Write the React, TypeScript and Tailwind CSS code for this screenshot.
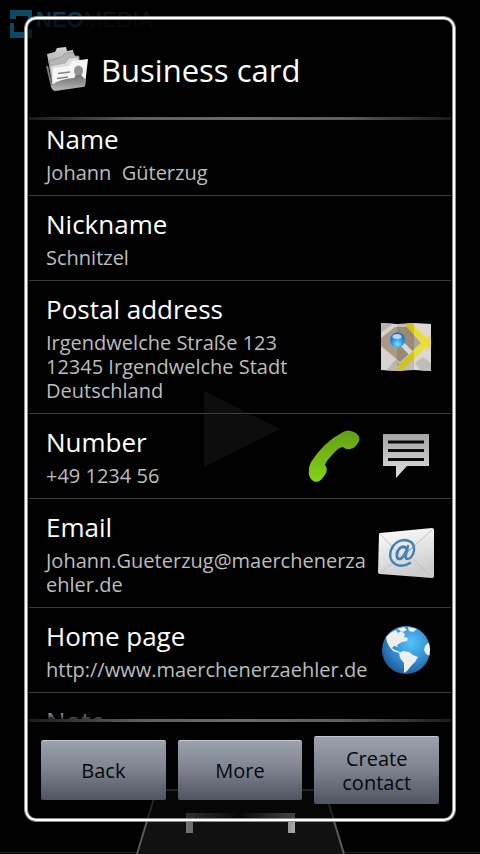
import React, { FC, ReactNode } from "react";
import clsx from "clsx";

const App = () => {
  return (
    <main className="relative h-screen overflow-hidden bg-black px-6 pt-4 pb-8 font-['Open_Sans',sans-serif]">
      <Backdrop />
      <section
        role="dialog"
        aria-labelledby="dialog-title"
        className="relative flex h-full flex-col rounded-xl border border-[#8c8c8c] bg-black/60 shadow-[inset_0_0_0_2px_#ffffff,inset_0_0_0_3px_#8c8c8c]"
      >
        <header className="flex h-[100px] shrink-0 items-center gap-2.5 px-5 pt-1">
          <CardsIcon />
          <h1 id="dialog-title" className="pt-0.5 text-[31px] leading-10 text-white">
            Business card
          </h1>
        </header>
        <Divider />

        <div className="relative min-h-0 flex-1">
          <ul className="h-full overflow-y-auto px-1 [scrollbar-width:none]">
            <Row title="Name" lines={["Johann  Güterzug"]} first />
            <Row title="Nickname" lines={["Schnitzel"]} />
            <Row
              title="Postal address"
              lines={[
                "Irgendwelche Straße 123",
                "12345 Irgendwelche Stadt",
                "Deutschland",
              ]}
            >
              <Action label="Show on map">
                <MapIcon />
              </Action>
            </Row>
            <Row title="Number" lines={["+49 1234 56"]}>
              <Action label="Call">
                <PhoneIcon />
              </Action>
              <Action label="Send message">
                <MessageIcon />
              </Action>
            </Row>
            <Row
              title="Email"
              lines={["Johann.Gueterzug@maerchenerza", "ehler.de"]}
            >
              <Action label="Send email">
                <MailIcon />
              </Action>
            </Row>
            <Row title="Home page" lines={["http://www.maerchenerzaehler.de"]}>
              <Action label="Open home page">
                <GlobeIcon />
              </Action>
            </Row>
            <Row title="Note" lines={[]} />
          </ul>
          {/* fading edge */}
          <div className="pointer-events-none absolute inset-x-1 bottom-0 h-3 bg-linear-to-b from-transparent to-black/80"></div>
        </div>

        <Divider />
        <footer className="flex h-[99px] shrink-0 items-center gap-3 px-4 pb-1">
          <DialogButton className="h-[60px]">Back</DialogButton>
          <DialogButton className="h-[60px]">More</DialogButton>
          <DialogButton className="h-[68px]">Create contact</DialogButton>
        </footer>
      </section>
    </main>
  );
};

const Divider = () => (
  <div className="mx-1 h-[3px] shrink-0 bg-[linear-gradient(to_right,#1a1a1a,#5c5c5c_25%,#6b6b6b_50%,#5c5c5c_75%,#1a1a1a)]"></div>
);

interface RowProps {
  title: string;
  lines: string[];
  first?: boolean;
  children?: ReactNode;
}

const Row: FC<RowProps> = (props) => {
  return (
    <li
      className={clsx(
        "flex items-center border-b border-[#3c3c3c] pr-[15px] pb-2.5 pl-[17px]",
        props.first ? "pt-[3px]" : "pt-3",
      )}
    >
      <div className="min-w-0 flex-1">
        <h2 className="text-[26px] leading-8 text-white">{props.title}</h2>
        <div className="mt-1.5 min-h-6 text-xl leading-6 whitespace-pre text-[#bdbdbd]">
          {props.lines.map((line) => (
            <p key={line}>{line}</p>
          ))}
        </div>
      </div>
      <div className="mb-0.5 flex shrink-0 gap-3">{props.children}</div>
    </li>
  );
};

const Action: FC<{ label: string; children: ReactNode }> = (props) => (
  <button
    type="button"
    aria-label={props.label}
    className="flex h-14 w-[60px] items-center justify-center"
  >
    {props.children}
  </button>
);

const DialogButton: FC<{ className: string; children: ReactNode }> = (
  props,
) => (
  <button
    type="button"
    className={clsx(
      "flex-1 rounded-xs border-t border-[#c3c8cf] bg-linear-to-b from-[#9ba2ad] via-[#7c828d] to-[#4e5560] px-4 pt-0.5 text-xl leading-6 text-[#05070c]",
      props.className,
    )}
  >
    {props.children}
  </button>
);

// dimmed start screen of the scanner that lies behind the dialog
const Backdrop = () => (
  <div aria-hidden="true">
    <div className="absolute top-[10px] left-[10px] flex gap-1">
      <svg width="22" height="28" viewBox="0 0 22 28" fill="#0b4863">
        <path d="M0 0H22V10H18V6H6V9H0ZM0 13H4V22H18V19H22V28H0Z" />
      </svg>
      <span className="font-['Liberation_Sans',sans-serif] text-[22px] leading-5 font-bold text-[#0c3a50]">
        NEO<span className="font-normal text-[#141414]">MEDIA</span>
      </span>
    </div>
    <svg
      className="absolute top-1/2 left-1/2 -translate-x-9 -translate-y-9"
      width="76"
      height="76"
      viewBox="0 0 76 76"
    >
      <path d="M0 0L76 38L0 76Z" fill="#202020" />
    </svg>
    <svg
      className="absolute bottom-0 left-1/2 -translate-x-1/2"
      width="480"
      height="66"
      viewBox="0 0 480 66"
      fill="none"
    >
      <path d="M0 64.5H137M344 64.5H480" stroke="#1c1c1c" />
      <path
        d="M137 66L154 10Q157 2 165 2H316Q324 2 327 10L344 66"
        fill="#111111"
        stroke="#5a5a5a"
        strokeWidth="2"
      />
      <path d="M186 25H295V45H288V31H193V45H186Z" fill="url(#scan)" />
      <defs>
        <linearGradient id="scan" x1="186" x2="295" gradientUnits="userSpaceOnUse">
          <stop stopColor="#777777" />
          <stop offset="0.5" stopColor="#111111" />
          <stop offset="1" stopColor="#aaaaaa" />
        </linearGradient>
      </defs>
    </svg>
  </div>
);

const CardsIcon = () => (
  <svg width="46" height="46" viewBox="0 0 46 46" className="shrink-0">
    <defs>
      <linearGradient id="folder" x1="0" y1="0" x2="0" y2="1">
        <stop stopColor="#d5d5d5" />
        <stop offset="1" stopColor="#777777" />
      </linearGradient>
      <linearGradient id="pocket" x1="0" y1="0" x2="0" y2="1">
        <stop stopColor="#6f6f6f" />
        <stop offset="1" stopColor="#b9b9b9" />
      </linearGradient>
    </defs>
    <path d="M2 8L10 6L12 2L21 1L22 5L28 4L31 40L8 42Z" fill="url(#folder)" />
    <path d="M4 15L17 11L20 7L28 6L30 10L34 10L36 38L8 42Z" fill="#b5b5b5" stroke="#888888" strokeWidth="0.6" />
    <path d="M5 20L20 17L24 12L33 11L34 15L38 15L38 38L9 42Z" fill="#dddddd" stroke="#999999" strokeWidth="0.6" />
    <path d="M8 22L24 20L27 15L43 13L40 39L7 41Z" fill="#f6f6f6" />
    <path d="M2 20L7 41" stroke="#777777" strokeWidth="2" />
    <path d="M13 27.500L25 26M12 32.500L23 31" stroke="#858585" strokeWidth="1.600" />
    <ellipse cx="33.500" cy="25" rx="4.500" ry="5.500" fill="#929292" />
    <path d="M6 39Q15 33 29 32L31 29H36L41 34L40 40Q40 41 38 41L10 45Q6 44 6 39Z" fill="url(#pocket)" />
  </svg>
);

const MapIcon = () => (
  <svg width="50" height="48" viewBox="0 0 50 48">
    <defs>
      <clipPath id="sheet">
        <path d="M0 0L16 1L33 0L50 1V48L33 47L16 48L0 47Z" />
      </clipPath>
      <radialGradient id="pin" cx="0.5" cy="0.75" r="0.7">
        <stop stopColor="#8be4ff" />
        <stop offset="0.5" stopColor="#249bea" />
        <stop offset="1" stopColor="#1668c4" />
      </radialGradient>
    </defs>
    <g clipPath="url(#sheet)">
      <path d="M0 0H50V48H0Z" fill="#d6d3d0" />
      <path d="M0 15L14 4L26 4L40 20L19 39L0 23Z" fill="#ab9a84" />
      <path d="M0 0L13 0L0 10ZM5 48L15 36L23 48ZM34 40L42 34L50 40V48H40Z" fill="#bbb5b0" />
      <path d="M18 18L30 30" stroke="#f3f0ee" strokeWidth="5" fill="none" />
      <path d="M26 0L50 24M50 15L17 47" stroke="#e8db1b" strokeWidth="6" />
      <path d="M33 0H50V48H33Z" fill="#ffffff" opacity="0.1" />
      <path d="M16 0H33V48H16Z" fill="#000000" opacity="0.1" />
    </g>
    <circle cx="16.500" cy="17" r="7.500" fill="url(#pin)" />
    <ellipse cx="16" cy="13.500" rx="4.500" ry="2.500" fill="#d8f0ff" opacity="0.8" />
  </svg>
);

const PhoneIcon = () => (
  <svg width="52" height="52" viewBox="0 0 52 52">
    <defs>
      <linearGradient id="handset" x1="0" y1="0" x2="0" y2="1">
        <stop stopColor="#629e16" />
        <stop offset="1" stopColor="#83d414" />
      </linearGradient>
    </defs>
    <path
      d="M35 2Q40 -1 46 2Q53 6 51 11Q48 18 42 19Q38 20 35 17Q31 17 25 24Q18 31 17 35Q20 38 18 43Q13 52 8 52Q3 51 1 45Q0 38 3 32Q16 12 35 2Z"
      fill="url(#handset)"
    />
  </svg>
);

const MessageIcon = () => (
  <svg width="46" height="44" viewBox="0 0 46 44">
    <defs>
      <linearGradient id="bubble" x1="0" y1="0" x2="0" y2="1">
        <stop stopColor="#a5a5a5" />
        <stop offset="1" stopColor="#dedede" />
      </linearGradient>
    </defs>
    <path d="M0 0H46V32H24L13 44V32H0Z" fill="url(#bubble)" />
    <path d="M5 8H41M5 16.500H41M5 25.500H41" stroke="#0c0c0c" strokeWidth="3" />
  </svg>
);

const MailIcon = () => (
  <svg width="56" height="50" viewBox="0 0 56 50">
    <defs>
      <linearGradient id="envelope" x1="0" y1="0" x2="0.300" y2="1">
        <stop stopColor="#ffffff" />
        <stop offset="1" stopColor="#cdcdcd" />
      </linearGradient>
    </defs>
    <path d="M1 6Q1 5 2 5L54 0Q56 0 56 2V48Q56 50 54 50L2 46Q0 46 0 44Z" fill="url(#envelope)" />
    <path d="M2 45L20 31M54 49L36 32M2 6L24 29L54 2" stroke="#c0c0c0" fill="none" />
    <g stroke="#4380ba" fill="none" strokeLinecap="round">
      <path d="M32 35Q24 40 17 36Q10 31 13 22Q17 12 27 12Q37 13 36 23Q34 31 29 31Q27 31 28 27L30 18" strokeWidth="2.400" />
      <path d="M29 21Q26 17 22 20Q18 24 19 29Q21 33 25 29L29 22" strokeWidth="2.800" />
    </g>
    <path d="M24 29L36 18" stroke="#85898e" />
  </svg>
);

const GlobeIcon = () => (
  <svg width="48" height="48" viewBox="0 0 48 48">
    <defs>
      <radialGradient id="ocean" cx="0.600" cy="0.350" r="0.650">
        <stop stopColor="#55c3f8" />
        <stop offset="0.600" stopColor="#348fd3" />
        <stop offset="1" stopColor="#235f9d" />
      </radialGradient>
      <clipPath id="disc">
        <circle cx="24" cy="24" r="24" />
      </clipPath>
    </defs>
    <g clipPath="url(#disc)">
      <path d="M0 0H48V48H0Z" fill="url(#ocean)" />
      <g fill="#eeeeec">
        <path d="M4 11Q8 6 14 4L16 7L19 5L23 8L22 11L26 12L25 15L20 16L15 19L16 21L12 20L10 22L13 24L16 25L18 26L17 27L11 25L7 20L5 16Z" />
        <path d="M15 3L22 1L25 4L21 6ZM26 1L35 3L31 6L27 5Z" />
        <path d="M17 27L21 25L27 26L31 29L36 31L33 36L29 40L25 45L22 47L22 37L18 32Z" />
        <path d="M43 20L46 17H48V30L44 28L42 24Z" />
      </g>
    </g>
  </svg>
);

export default App;
